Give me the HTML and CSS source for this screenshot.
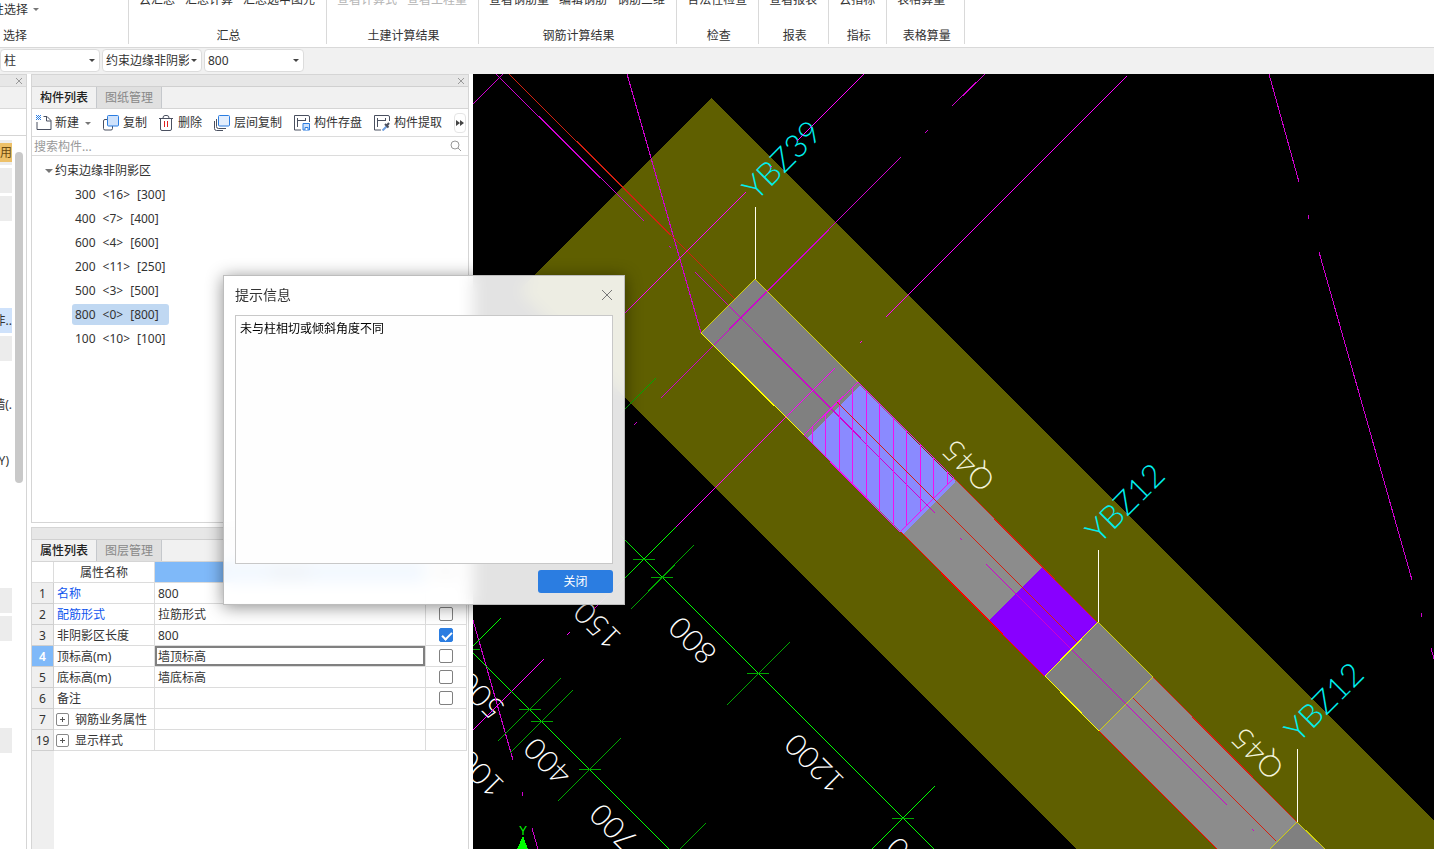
FILE: index.html
```html
<!DOCTYPE html>
<html lang="zh-CN">
<head>
  <meta charset="UTF-8" />
  <title>构件列表</title>
  <meta name="viewport" content="width=device-width, initial-scale=1.0" />
  <link rel="stylesheet" href="styles.css">
</head>
<body>
  <header class="ribbon">
    <div class="group group-first">
      <div class="tools"><button>性选择<i class="caret"></i></button></div>
      <div class="group-name">选择</div>
    </div>
    <div class="group">
      <div class="tools"><button>云汇总</button><button>汇总计算</button><button>汇总选中图元</button></div>
      <div class="group-name">汇总</div>
    </div>
    <div class="group">
      <div class="tools"><button disabled>查看计算式</button><button disabled>查看工程量</button></div>
      <div class="group-name">土建计算结果</div>
    </div>
    <div class="group">
      <div class="tools"><button>查看钢筋量</button><button>编辑钢筋</button><button>钢筋三维</button></div>
      <div class="group-name">钢筋计算结果</div>
    </div>
    <div class="group">
      <div class="tools"><button>合法性检查</button></div>
      <div class="group-name">检查</div>
    </div>
    <div class="group">
      <div class="tools"><button>查看报表</button></div>
      <div class="group-name">报表</div>
    </div>
    <div class="group">
      <div class="tools"><button>云指标</button></div>
      <div class="group-name">指标</div>
    </div>
    <div class="group group-wide">
      <div class="tools"><button>表格算量</button></div>
      <div class="group-name">表格算量</div>
    </div>
  </header>

  <div class="filters">
    <label class="combo"><select aria-label="构件类型"><option>柱</option></select></label>
    <label class="combo"><select aria-label="构件类别"><option>约束边缘非阴影区</option></select></label>
    <label class="combo"><select aria-label="构件名称"><option>800</option></select></label>
  </div>

  <main class="workspace">
    <aside class="nav">
      <div class="panel-bar"><button class="close" aria-label="关闭导航"><svg width="8" height="8" viewBox="0 0 8 8"><path d="M1 1l6 6M7 1L1 7"/></svg></button></div>
      <div class="nav-tabs"></div>
      <div class="nav-head"></div>
      <div class="nav-body">
        <ul class="nav-list">
          <li class="block"><span class="trial">试用</span></li>
          <li class="block"></li>
          <li class="block"></li>
          <li></li>
          <li></li>
          <li></li>
          <li class="current">非..</li>
          <li class="block"></li>
          <li></li>
          <li>墙(.</li>
          <li></li>
          <li class="inset">Y)</li>
          <li></li>
          <li></li>
          <li></li>
          <li></li>
          <li class="block"></li>
          <li class="block"></li>
          <li></li>
          <li></li>
          <li></li>
          <li class="block"></li>
        </ul>
        <div class="thumb"></div>
      </div>
    </aside>

    <div class="side">
      <section class="panel components">
        <div class="panel-bar"><button class="close" aria-label="关闭构件列表"><svg width="8" height="8" viewBox="0 0 8 8"><path d="M1 1l6 6M7 1L1 7"/></svg></button></div>
        <div class="tabs"><button class="active">构件列表</button><button>图纸管理</button></div>
        <div class="toolbar">
          <button class="new">
            <svg width="16" height="16" viewBox="0 0 16 16"><path d="M1 7v7.500h14V5.500l-4-4H7.500M10.500 1.500v4.500h4.500" class="ln"/><path d="M0 .5h5M0 2.500h5M0 4.500h5" stroke="#2b7de1" stroke-dasharray="1 1" fill="none"/><path d="M1 1.500h4M1 3.500h4" stroke="#2b7de1" stroke-dasharray="1 1" fill="none"/></svg>
            新建<i class="caret"></i>
          </button>
          <button class="copy">
            <svg width="16" height="16" viewBox="0 0 16 16"><path d="M5 4.500H2q-1.500 0-1.500 1.500v7.500q0 1.500 1.500 1.500h6q1.500 0 1.500-1.500V11" class="ln"/><rect x="4.500" y="0.500" width="11" height="10.500" rx="1" fill="#cfe2fb" stroke="#2b7de1"/></svg>
            复制
          </button>
          <button class="del">
            <svg width="14" height="16" viewBox="0 0 14 16"><path d="M0 3.500h14M4 3q0-2.500 2-2.500h2q2 0 2 2.500M1.500 4v10q0 1.500 1.500 1.500h8q1.500 0 1.500-1.500V4" class="ln"/><path d="M5.500 6v6M8.500 6v6" stroke="#e02020"/></svg>
            删除
          </button>
          <button class="floor">
            <svg width="16" height="16" viewBox="0 0 16 16"><path d="M.5 6v7.500q0 2 2 2H9M2.500 4v7.500q0 2 2 2H12" class="ln"/><rect x="4.500" y="0.500" width="11" height="10.500" rx="1" fill="#e3eefd" stroke="#2b7de1"/></svg>
            层间复制
          </button>
          <button class="save">
            <svg width="16" height="16" viewBox="0 0 16 16"><path d="M15.500 7V2q0-1.500-1.500-1.500H.5v14.500H7M3.500 3v9M3.500 5.500h8M11.500 3v3" class="ln"/><path d="M9 8.500h6.500v6.500H9z" fill="#cfe2fb" stroke="#2b7de1"/><path d="M11 15v-2.500h3V15" fill="#fff" stroke="#2b7de1"/></svg>
            构件存盘
          </button>
          <button class="pick">
            <svg width="16" height="16" viewBox="0 0 16 16"><path d="M15.500 6V2q0-1.500-1.500-1.500H.5v14.500H7M3.500 3v9M3.500 5.500h8M11.500 3v3" class="ln"/><path d="M8.500 15.500l4-4" stroke="#6f9fe0" stroke-width="2"/><path d="M11 9l3.500 3.500M12.500 11l2.500-3" stroke="#4a5060" stroke-width="2"/></svg>
            构件提取
          </button>
          <button class="more" aria-label="更多"><svg width="8" height="6" viewBox="0 0 8 6"><path d="M0 0l4 3-4 3zM4 0l4 3-4 3z" fill="#444"/></svg></button>
        </div>
        <div class="search">
          <input type="text" placeholder="搜索构件..." aria-label="搜索构件">
          <svg width="12" height="12" viewBox="0 0 12 12"><circle cx="5" cy="5" r="4" fill="none" stroke="#999"/><path d="M8 8l3 3" stroke="#999"/></svg>
        </div>
        <div class="tree">
          <div class="tree-root"><i class="caret"></i>约束边缘非阴影区</div>
          <ul>
            <li><a href="#"><span>300</span><span>&lt;16&gt;</span><span>[300]</span></a></li>
            <li><a href="#"><span>400</span><span>&lt;7&gt;</span><span>[400]</span></a></li>
            <li><a href="#"><span>600</span><span>&lt;4&gt;</span><span>[600]</span></a></li>
            <li><a href="#"><span>200</span><span>&lt;11&gt;</span><span>[250]</span></a></li>
            <li><a href="#"><span>500</span><span>&lt;3&gt;</span><span>[500]</span></a></li>
            <li><a href="#" class="selected"><span>800</span><span>&lt;0&gt;</span><span>[800]</span></a></li>
            <li><a href="#"><span>100</span><span>&lt;10&gt;</span><span>[100]</span></a></li>
          </ul>
        </div>
      </section>

      <section class="panel props">
        <div class="panel-bar"></div>
        <div class="tabs"><button class="active">属性列表</button><button>图层管理</button></div>
        <div class="sheet">
          <table>
            <colgroup><col class="c-no"><col class="c-name"><col><col class="c-check"></colgroup>
            <thead>
              <tr><th class="corner"></th><th>属性名称</th><th class="current">属性值</th><th>附加</th></tr>
            </thead>
            <tbody>
              <tr><th>1</th><td class="key">名称</td><td>800</td><td></td></tr>
              <tr><th>2</th><td class="key">配筋形式</td><td>拉筋形式</td><td><input type="checkbox" aria-label="配筋形式"></td></tr>
              <tr><th>3</th><td>非阴影区长度</td><td>800</td><td><input type="checkbox" aria-label="非阴影区长度" checked></td></tr>
              <tr class="current"><th>4</th><td>顶标高(m)</td><td class="editing">墙顶标高</td><td><input type="checkbox" aria-label="顶标高"></td></tr>
              <tr><th>5</th><td>底标高(m)</td><td>墙底标高</td><td><input type="checkbox" aria-label="底标高"></td></tr>
              <tr><th>6</th><td>备注</td><td></td><td><input type="checkbox" aria-label="备注"></td></tr>
              <tr><th>7</th><td><button class="expand" aria-label="展开"></button>钢筋业务属性</td><td></td><td></td></tr>
              <tr><th>19</th><td><button class="expand" aria-label="展开"></button>显示样式</td><td></td><td></td></tr>
            </tbody>
          </table>
        </div>
      </section>
    </div>

    <div class="canvas">
      <svg viewBox="473 74 961 775" preserveAspectRatio="xMinYMin slice">
        <defs>
          <clipPath id="hatch"><path d="M858 382L954 478L900 532L804 435z"/></clipPath>
        </defs>

        <!-- slab and walls -->
        <path d="M711 98L1434 821V849H1076L518 291z" fill="#5f5f00"/>
        <path d="M954 478L1042 567L989 620L901 532z" fill="#8c8c8c"/>
        <path d="M1153 677L1297 822L1325 849H1217L1099 731z" fill="#8c8c8c"/>
        <path d="M755 279L858 382L956 482L903 534L701 333z" fill="#808080"/>
        <path d="M860 385L956 482L903 534L807 438z" fill="#8a8aff"/>
        <path d="M1042 567L1098 623L1044 676L989 620z" fill="#8800ff"/>
        <path d="M1098 622L1153 677L1099 731L1045 676z" fill="#808080"/>
        <path d="M1297 822L1325 849H1270z" fill="#808080"/>

        <!-- labels -->
        <g class="mark cyan">
          <text transform="translate(790 168) rotate(-45)">YBZ39</text>
          <text transform="translate(1133 511) rotate(-45)">YBZ12</text>
          <text transform="translate(1332 710) rotate(-45)">YBZ12</text>
        </g>
        <g class="mark wall">
          <text transform="translate(976 458) rotate(225)">Q45</text>
          <text transform="translate(1265 746) rotate(225)">Q45</text>
        </g>
        <g class="mark dim">
          <text transform="translate(605 618) rotate(225)">150</text>
          <text transform="translate(700 633) rotate(225)">800</text>
          <text transform="translate(822 756) rotate(225)">1200</text>
          <text transform="translate(488 688) rotate(225)">500</text>
          <text transform="translate(488 766) rotate(225)">100</text>
          <text transform="translate(555 754) rotate(225)">400</text>
          <text transform="translate(621 820) rotate(225)">700</text>
          <text transform="translate(905 841) rotate(225)">0</text>
        </g>

        <!-- axis grid -->
        <g class="axis">
          <path d="M496 74L644 221M669 246l2 2M695 272L935 513M960 538l2 2M986 564L1227 805M1252 829l2 2"/>
          <path d="M473 104L503 74M627 74L701 333M901 157L661 398M985 74L952 106M925 133l3-3M634 425l3-3"/>
          <path d="M1269 74L1299 182M1308 215l1 4M1319 252L1412 580M1421 613l1 4M1431 648l3 11"/>
          <path d="M473 620L513 760M522 792l1 4M532 828l6 21"/>
          <path class="near" d="M864 74L797 141M770 168l2-2M746 192L620 318M1127 76L886 317M860 343l2-2M835 368L594 609M567 635l3-3M544 659L473 730"/>
        </g>
        <g clip-path="url(#hatch)">
          <path class="rib" d="M812.500 380v155M825.500 380v155M839.500 380v155M852.500 380v155M866.500 380v155M879.500 380v155M893.500 380v155M906.500 380v155M920.500 380v155M933.500 380v155M947.500 380v155"/>
        </g>
        <path class="rib" d="M858 382L954 478L900 532L804 435z"/>

        <path class="red" d="M509 74L735 299M837 402L1078 643M1133 698L1276 841M954 478L1098 623M1153 677L1297 822"/>
        <path class="red strong" d="M901 532L1044 676M1099 731L1218 850"/>
        <path class="yellow" d="M701 333L755 279L858 382M1098 622L1153 677L1099 731M1270 849L1297 822L1325 849"/>
        <path class="yellow strong" d="M701 333L804 435M1098 622L1045 676L1099 731"/>
        <path class="lead" d="M755.500 207V279M1098.500 550V622M1297.500 749V822"/>

        <!-- dimension lines -->
        <path class="green strong" d="M620 535L934 849M473 653L669 849M676 527L620 583M935 786L872 849M473 646L501 618"/>
        <path class="green" d="M694 545L631 609M790 642L727 705M561 678L498 741M573 690L510 753M621 738L558 801M706 823L679 850M656 378L620 414"/>
        <path class="green" d="M747 673.500h22M579 769.500h22M519 709.500h22M473 649.500h7"/>
        <path class="green" d="M633 559.500h22M651 577.500h22M892 818.500h22M531 721.500h22"/>
        <path d="M523 836L528 849H517z" fill="#00ff00"/>
        <text class="ucs" x="523" y="835">Y</text>
      </svg>
    </div>
  </main>

  <div class="dialog" role="dialog" aria-labelledby="dlgTitle">
    <div class="dialog-head">
      <h2 id="dlgTitle">提示信息</h2>
      <button class="dialog-x" aria-label="关闭窗口"><svg width="12" height="12" viewBox="0 0 12 12"><path d="M1 1l10 10M11 1L1 11"/></svg></button>
    </div>
    <textarea readonly aria-labelledby="dlgTitle">未与柱相切或倾斜角度不同</textarea>
    <div class="dialog-foot"><button class="primary">关闭</button></div>
  </div>
</body>
</html>
```
FILE: styles.css
```css
* { box-sizing: border-box; }

body {
  margin: 0;
  height: 100vh;
  display: flex;
  flex-direction: column;
  overflow: hidden;
  background: #fff;
  color: #333;
  font: 12px/16px "Noto Sans", "Noto Sans CJK SC", sans-serif;
}

button, input, select, textarea {
  font: inherit;
  color: inherit;
  margin: 0;
  padding: 0;
  border: none;
  border-radius: 0;
  background: none;
  outline: none;
}

ul { list-style: none; margin: 0; padding: 0; }
a { color: inherit; text-decoration: none; }

.caret {
  display: inline-block;
  border: 3px solid transparent;
  border-top-color: #777;
  border-bottom: none;
}

/* ribbon */
.ribbon {
  display: flex;
  flex: none;
  height: 48px;
  padding-bottom: 3px;
  overflow: hidden;
  border-bottom: 1px solid #d9d9d9;
}

.group {
  display: flex;
  flex-direction: column;
  justify-content: flex-end;
  gap: 20px;
  padding: 0 11px 0 10px;
  border-right: 1px solid #d9d9d9;
  white-space: nowrap;
}

.tools { display: flex; gap: 10px; }
.tools button:disabled { color: #b5b5b5; }
.group-name { text-align: center; padding-left: 3px; }
.group-wide { min-width: 78px; }

.group-first {
  width: 129px;
  padding: 0;
  gap: 10px;
}
.group-first .tools { margin-left: -8px; }
.group-first .caret { margin: 0 0 3px 5px; }
.group-first .group-name { text-align: left; }

/* filters */
.filters {
  display: flex;
  flex: none;
  gap: 2px;
  height: 26px;
  padding: 1px 0 2px;
  background: #f1f1f1;
}

.combo {
  position: relative;
  width: 100px;
  border: 1px solid #dcdcdc;
  border-radius: 4px;
  background: #fff;
}
.combo select {
  appearance: none;
  width: 86px;
  height: 21px;
  padding-left: 3px;
  overflow: hidden;
}
.combo::after {
  content: "";
  position: absolute;
  right: 4px;
  top: 9px;
  border: 3px solid transparent;
  border-top-color: #444;
  border-bottom: none;
}

.workspace {
  display: flex;
  flex: 1;
  min-height: 0;
}

/* shared panel parts */
.panel-bar {
  flex: none;
  display: flex;
  justify-content: flex-end;
  align-items: center;
  height: 12px;
  padding-right: 3px;
  background: #e7e7e7;
  border-top: 1px solid #d5d5d5;
}
.close { display: flex; }
.close path { stroke: #999; fill: none; }

/* navigation strip */
.nav {
  flex: none;
  display: flex;
  flex-direction: column;
  width: 27px;
  margin-right: 4px;
  border-right: 1px solid #d5d5d5;
}
.nav-tabs {
  flex: none;
  height: 23px;
  background: #f1f1f1;
  border-top: 1px solid #d9d9d9;
  border-bottom: 1px solid #d9d9d9;
}
.nav-head { flex: none; height: 27px; border-bottom: 1px solid #d5d5d5; }
.nav-body {
  flex: 1;
  min-height: 0;
  display: flex;
  gap: 3px;
  padding-top: 4px;
}
.nav-list {
  width: 12px;
  display: flex;
  flex-direction: column;
  gap: 3px;
  overflow: hidden;
}
.nav-list li {
  flex: none;
  display: flex;
  justify-content: flex-end;
  align-items: center;
  height: 25px;
  white-space: nowrap;
}
.nav-list .block { background: #ececec; }
.nav-list .current { background: #cfe2fb; }
.nav-list .inset { padding-right: 3px; }
.trial {
  height: 19px;
  line-height: 19px;
  background: #edc068;
  color: #6b4a10;
}
.thumb {
  width: 8px;
  height: 331px;
  margin-top: 12px;
  border-radius: 4px;
  background: #c9c9c9;
}

/* component list and properties */
.side {
  flex: none;
  display: flex;
  flex-direction: column;
  gap: 4px;
  width: 438px;
  margin-right: 4px;
}

.panel {
  display: flex;
  flex-direction: column;
  border: 1px solid #d5d5d5;
  border-top: none;
}
.components { height: 449px; }
.props { flex: 1; border-bottom: none; }

.tabs {
  flex: none;
  display: flex;
  height: 23px;
  background: #f1f1f1;
  border-top: 1px solid #d0d0d0;
  border-bottom: 1px solid #d5d5d5;
}
.tabs button {
  width: 65px;
  padding-top: 1px;
  background: #e0e0e0;
  color: #888;
  border-right: 1px solid #c5c8cc;
}
.tabs .active { background: #f1f1f1; color: #222; font-weight: 500; }

.toolbar {
  flex: none;
  display: flex;
  align-items: center;
  height: 28px;
  padding: 1px 2px 0 4px;
  border-bottom: 1px solid #dcdcdc;
}
.toolbar button {
  display: flex;
  align-items: center;
  gap: 4px;
  margin-right: 12px;
  white-space: nowrap;
}
.toolbar .caret { margin-left: 3px; }
.toolbar .new { gap: 3px; }
.toolbar .del { gap: 5px; }
.toolbar .ln { fill: none; stroke: #4a5060; }
.toolbar .pick { margin-right: 0; }
.toolbar .more {
  margin: 0 0 0 auto;
  height: 20px;
  padding: 0 1px;
  border: 1px solid #e5e5e5;
  border-radius: 4px;
}

.search {
  flex: none;
  display: flex;
  align-items: center;
  height: 19px;
  padding: 0 6px 0 2px;
  border-bottom: 1px solid #dcdcdc;
}
.search input { flex: 1; height: 18px; }
.search input::placeholder { color: #999; }

.tree { padding-top: 3px; line-height: 24px; }
.tree-root { display: flex; align-items: center; gap: 2px; padding-left: 13px; }
.tree-root .caret { border-width: 4px; border-bottom: none; }
.tree li { display: flex; align-items: center; height: 24px; padding: 0 0 2px 40px; }
.tree a {
  display: flex;
  gap: 7px;
  height: 21px;
  min-width: 97px;
  padding: 0 3px;
  line-height: 21px;
  border-radius: 3px;
}
.tree .selected { background: #c0d8f2; }

.sheet { flex: 1; background: linear-gradient(to right, #efefef 22px, #fff 22px); }
table {
  width: 435px;
  table-layout: fixed;
  border-collapse: separate;
  border-spacing: 0;
}
.c-no { width: 22px; }
.c-name { width: 101px; }
.c-check { width: 41px; }
th, td {
  height: 21px;
  padding: 2px 3px 0;
  line-height: 16px;
  border-right: 1px solid #dcdcdc;
  border-bottom: 1px solid #dcdcdc;
  text-align: left;
  font-weight: 400;
  white-space: nowrap;
  background: #fff;
}
thead th { text-align: center; }
tbody th { padding: 2px 0 0; text-align: center; background: #efefef; border-color: #cfcfcf; }
thead .current { background: #7fb9f9; }
tbody .current th { background: #7fb9f9; color: #fff; font-weight: 600; }
.key { color: #1156ee; }
.editing { box-shadow: inset 0 0 0 2px #808080; }
td:last-child { padding: 0; text-align: center; line-height: 0; }

input[type="checkbox"] {
  appearance: none;
  position: relative;
  width: 14px;
  height: 14px;
  border: 1px solid #808080;
  border-radius: 2px;
  background: #fff;
}
input[type="checkbox"]:checked { background: #2b7de1; border-color: #2b7de1; }
input[type="checkbox"]:checked::after {
  content: "";
  position: absolute;
  left: 4px;
  top: 1px;
  width: 4px;
  height: 8px;
  border: solid #fff;
  border-width: 0 2px 2px 0;
  transform: rotate(45deg);
}

.expand {
  width: 13px;
  height: 13px;
  margin: 0 6px 0 -1px;
  border: 1px solid #888;
  border-radius: 2px;
  vertical-align: -1px;
  background:
    linear-gradient(#555, #555) center / 5px 1px no-repeat,
    linear-gradient(#555, #555) center / 1px 5px no-repeat;
}

/* drawing area */
.canvas { flex: 1; min-width: 0; background: #000; overflow: hidden; }
.canvas svg { display: block; width: 100%; height: 100%; }
.canvas path { shape-rendering: crispEdges; }
.mark text {
  font-family: Lato, "Liberation Sans", sans-serif;
  font-weight: 300;
  text-anchor: middle;
}
.cyan { font-size: 32px; fill: #00f0f0; }
.wall { font-size: 30px; fill: #f4f4dc; }
.dim { font-size: 30px; fill: #fff; }
.axis { fill: none; stroke: #d000d0; }
.axis .near { stroke: #ff00ff; }
.rib { fill: none; stroke: #f010f0; }
.red { fill: none; stroke: #d42010; }
.yellow { fill: none; stroke: #d0d010; }
.lead { stroke: #fffff0; }
.green { fill: none; stroke: #00a800; }
.red.strong { stroke: #ff0000; }
.yellow.strong { stroke: #ffff00; }
.green.strong { stroke: #00ff00; }
.ucs { fill: #00ff00; font: 12px "Liberation Sans", sans-serif; text-anchor: middle; }

/* message dialog */
.dialog {
  position: absolute;
  left: 223px;
  top: 275px;
  width: 402px;
  padding: 0 11px 11px;
  border: 1px solid #bdbdbd;
  background: rgba(255, 255, 255, 0.89);
  backdrop-filter: blur(8px);
  box-shadow: 0 2px 16px rgba(0, 0, 0, 0.45);
}
.dialog-head {
  display: flex;
  align-items: center;
  justify-content: space-between;
  height: 39px;
  padding-bottom: 2px;
}
.dialog h2 { margin: 0; font-size: 14px; font-weight: 400; line-height: 20px; }
.dialog-x { display: flex; }
.dialog-x path { stroke: #777; fill: none; }
.dialog textarea {
  display: block;
  width: 100%;
  height: 249px;
  padding: 5px 4px;
  border: 1px solid #c8c8c8;
  background: #fefefe;
  color: #000;
  resize: none;
}
.dialog-foot { display: flex; justify-content: flex-end; padding-top: 6px; }
.primary {
  width: 75px;
  height: 23px;
  padding-top: 1px;
  border-radius: 3px;
  background: #2b7de1;
  color: #fff;
}
```
